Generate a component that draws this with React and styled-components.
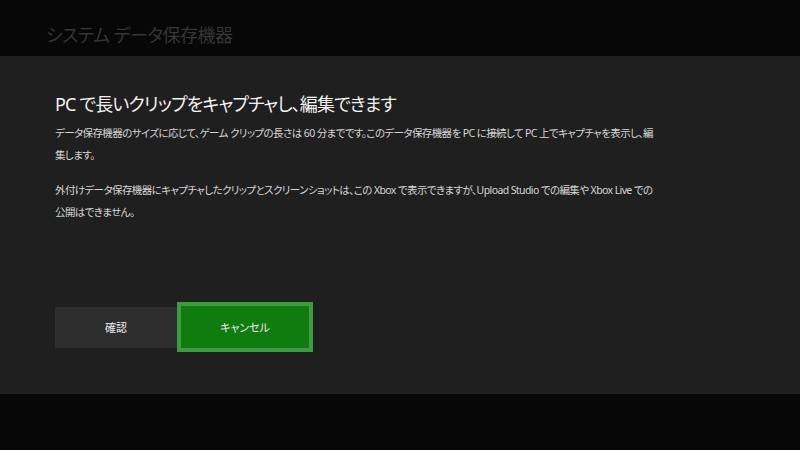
import React from 'react';
import styled, { createGlobalStyle } from 'styled-components';

const GlobalStyle = createGlobalStyle`
  html, body {
    margin: 0;
    padding: 0;
    background: #070707;
  }
  body {
    font-family: "Noto Sans", "Noto Sans CJK JP", sans-serif;
    font-feature-settings: "palt";
  }
`;

const Screen = styled.div`
  display: flex;
  flex-direction: column;
  height: 450px;
  width: 800px;
  background: #070707;
  overflow: hidden;
`;

const Header = styled.div`
  align-items: center;
  box-sizing: border-box;
  color: #363636;
  display: flex;
  font-size: 18px;
  height: 56px;
  letter-spacing: -0.5px;
  padding: 12px 0 0 46px;
`;

const Dialog = styled.section`
  background: #1f1f1f;
  box-sizing: border-box;
  display: flex;
  flex-direction: column;
  height: 338px;
  padding: 34px 55px 0;
`;

const Title = styled.h1`
  color: #f2f2f2;
  font-size: 18px;
  font-weight: 400;
  letter-spacing: -0.85px;
  line-height: 28px;
  margin: 0 0 4px;
`;

const Body = styled.p`
  color: #d6d6d6;
  font-size: 10.5px;
  letter-spacing: -0.6px;
  line-height: 22px;
  margin: 0 0 13px;
  max-width: 606px;
`;

const Buttons = styled.div`
  align-items: center;
  display: flex;
  margin-top: 66px;
`;

const Button = styled.button`
  align-items: center;
  background: ${p => (p.$primary ? '#107c10' : '#2e2e2e')};
  border: ${p => (p.$primary ? '4px solid #3f9b3f' : 'none')};
  box-sizing: border-box;
  color: #e8e8e8;
  display: flex;
  font-family: inherit;
  font-feature-settings: "palt";
  font-size: 11px;
  height: ${p => (p.$primary ? '50px' : '41px')};
  justify-content: center;
  padding: 0;
  width: ${p => (p.$primary ? '136px' : '122px')};
`;

const App = () => (
  <Screen>
    <GlobalStyle />
    <Header>システム データ保存機器</Header>
    <Dialog>
      <Title>PC で長いクリップをキャプチャし、編集できます</Title>
      <Body>
        データ保存機器のサイズに応じて、ゲーム クリップの長さは 60 分までです。このデータ保存機器を PC に接続して PC 上でキャプチャを表示し、編集します。
      </Body>
      <Body>
        外付けデータ保存機器にキャプチャしたクリップとスクリーンショットは、この Xbox で表示できますが、Upload Studio での編集や Xbox Live での公開はできません。
      </Body>
      <Buttons>
        <Button>確認</Button>
        <Button $primary>キャンセル</Button>
      </Buttons>
    </Dialog>
  </Screen>
);

export default App;
